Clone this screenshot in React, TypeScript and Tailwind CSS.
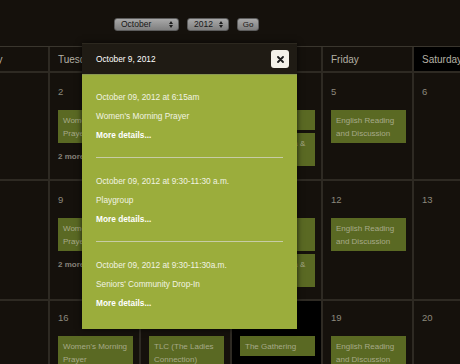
import React from 'react';

type Ev = { title: string };
type Cell = { day: number; events: Ev[]; more?: string; today?: boolean };

const WEEKDAYS = ['Monday', 'Tuesday', 'Wednesday', 'Thursday', 'Friday', 'Saturday'];

const prayer = { title: "Women's Morning Prayer" };
const english = { title: 'English Reading and Discussion' };
const fellowship = { title: 'Fellowship Tea & Chat' };

const ROWS: { height: string; pad: string; cells: Cell[] }[] = [
    {
        height: 'h-[106px]',
        pad: 'pt-[11px]',
        cells: [
            { day: 1, events: [] },
            { day: 2, events: [prayer], more: '2 more' },
            { day: 3, events: [{ title: 'Playgroup' }] },
            { day: 4, events: [{ title: 'Choir Practice' }, fellowship] },
            { day: 5, events: [english] },
            { day: 6, events: [] },
        ],
    },
    {
        height: 'h-[118px]',
        pad: 'pt-[11px]',
        cells: [
            { day: 8, events: [] },
            { day: 9, events: [prayer], more: '2 more' },
            { day: 10, events: [{ title: 'Playgroup' }] },
            { day: 11, events: [{ title: 'Youth Group Games Night' }, fellowship] },
            { day: 12, events: [english] },
            { day: 13, events: [] },
        ],
    },
    {
        height: 'h-[80px]',
        pad: 'pt-[9px]',
        cells: [
            { day: 15, events: [] },
            { day: 16, events: [prayer] },
            { day: 17, events: [{ title: 'TLC (The Ladies Connection)' }] },
            { day: 18, events: [{ title: 'The Gathering' }], today: true },
            { day: 19, events: [english] },
            { day: 20, events: [] },
        ],
    },
];

const DETAILS = [
    { when: 'October 09, 2012 at 6:15am', title: "Women's Morning Prayer" },
    { when: 'October 09, 2012 at 9:30-11:30 a.m.', title: 'Playgroup' },
    { when: 'October 09, 2012 at 9:30-11:30a.m.', title: "Seniors' Community Drop-In" },
];

function Arrows() {
    return (
        <svg width="4" height="7" viewBox="0 0 4 7">
            <path d="M0 3 L2 0 L4 3 Z M0 4 L2 7 L4 4 Z" fill="#1c1c1c" />
        </svg>
    );
}

function FakeSelect({ label, width }: { label: string; width: string }) {
    return (
        <div
            className={`${width} h-[13px] flex items-center justify-between pl-[6px] pr-[5px] rounded-[3px] border border-[#5c5c5c] bg-gradient-to-b from-[#a9a9a9] to-[#7f7f7f] text-[8.5px] text-[#161616]`}
        >
            <span>{label}</span>
            <Arrows />
        </div>
    );
}

export default function App() {
    return (
        <div className="relative w-[460px] h-[364px] overflow-hidden bg-[#15110c] font-['Liberation_Sans',Arial,sans-serif]">
            {/* Month picker */}
            <div className="h-[46px] flex items-start gap-2 pt-[18px] pl-[114px]">
                <FakeSelect label="October" width="w-[65px]" />
                <FakeSelect label="2012" width="w-[42px]" />
                <div className="w-[22px] h-[13px] flex items-center justify-center rounded-[3px] border border-[#5c5c5c] bg-gradient-to-b from-[#a9a9a9] to-[#7f7f7f] text-[8px] text-[#161616]">
                    Go
                </div>
            </div>

            {/* Calendar grid */}
            <div className="ml-[-41px] w-[544px] grid grid-cols-6 gap-[2px] bg-[#2e2a23] border-t border-[#3a362e]">
                {WEEKDAYS.map((d) => (
                    <div
                        key={d}
                        className={`h-[24px] flex items-center pl-2 text-[10px] text-[#b4b0a4] ${d === 'Saturday' ? 'bg-black' : 'bg-[#15110c]'}`}
                    >
                        {d}
                    </div>
                ))}
                {ROWS.map((row) =>
                    row.cells.map((cell) => (
                        <div
                            key={cell.day}
                            className={`${row.height} ${row.pad} flex flex-col ${cell.today ? 'bg-black' : 'bg-[#15110c]'}`}
                        >
                            <span className="pl-2 text-[9.5px] leading-4 text-[#8c887c]">{cell.day}</span>
                            <div className="mt-[10px] flex flex-col gap-[3px]">
                                {cell.events.map((ev, i) => (
                                    <div
                                        key={i}
                                        className="ml-2 w-[75px] pt-[4px] pb-[3px] px-[5px] bg-[#5a6923] text-[8px] leading-[13px] text-[#a7a989]"
                                    >
                                        {ev.title}
                                    </div>
                                ))}
                            </div>
                            {cell.more && (
                                <span className="mt-[7px] pl-2 text-[8px] leading-[14px] font-bold text-[#87837a]">
                                    {cell.more}
                                </span>
                            )}
                        </div>
                    ))
                )}
            </div>

            {/* Day popup */}
            <div className="absolute left-[82px] top-[43px] w-[215px] shadow-[0_0_6px_rgba(0,0,0,0.7)]">
                <div className="h-[31px] flex items-center justify-between pl-[14px] pr-[8px] bg-[#1f1b14] border-t border-[#2c281f]">
                    <span className="text-[8.3px] text-white">October 9, 2012</span>
                    <div className="w-[18px] h-[18px] flex items-center justify-center rounded-[3px] bg-[#f3f1e9]">
                        <svg width="7" height="7" viewBox="0 0 7 7">
                            <path d="M1 1 L6 6 M6 1 L1 6" stroke="#1a1a1a" strokeWidth="1.8" strokeLinecap="round" />
                        </svg>
                    </div>
                </div>
                <div className="h-[255px] bg-[#9bad3c] border-t border-[#8a9852] pt-[13px] px-[14px] text-[8.3px] leading-[19px] text-[#f1f3e3]">
                    {DETAILS.map((d, i) => (
                        <div key={i}>
                            {i > 0 && <div className="mt-[12px] mb-[14px] h-px bg-[#c7cca6]" />}
                            <p>{d.when}</p>
                            <p>{d.title}</p>
                            <p className="font-bold text-white">More details...</p>
                        </div>
                    ))}
                </div>
            </div>
        </div>
    );
}
